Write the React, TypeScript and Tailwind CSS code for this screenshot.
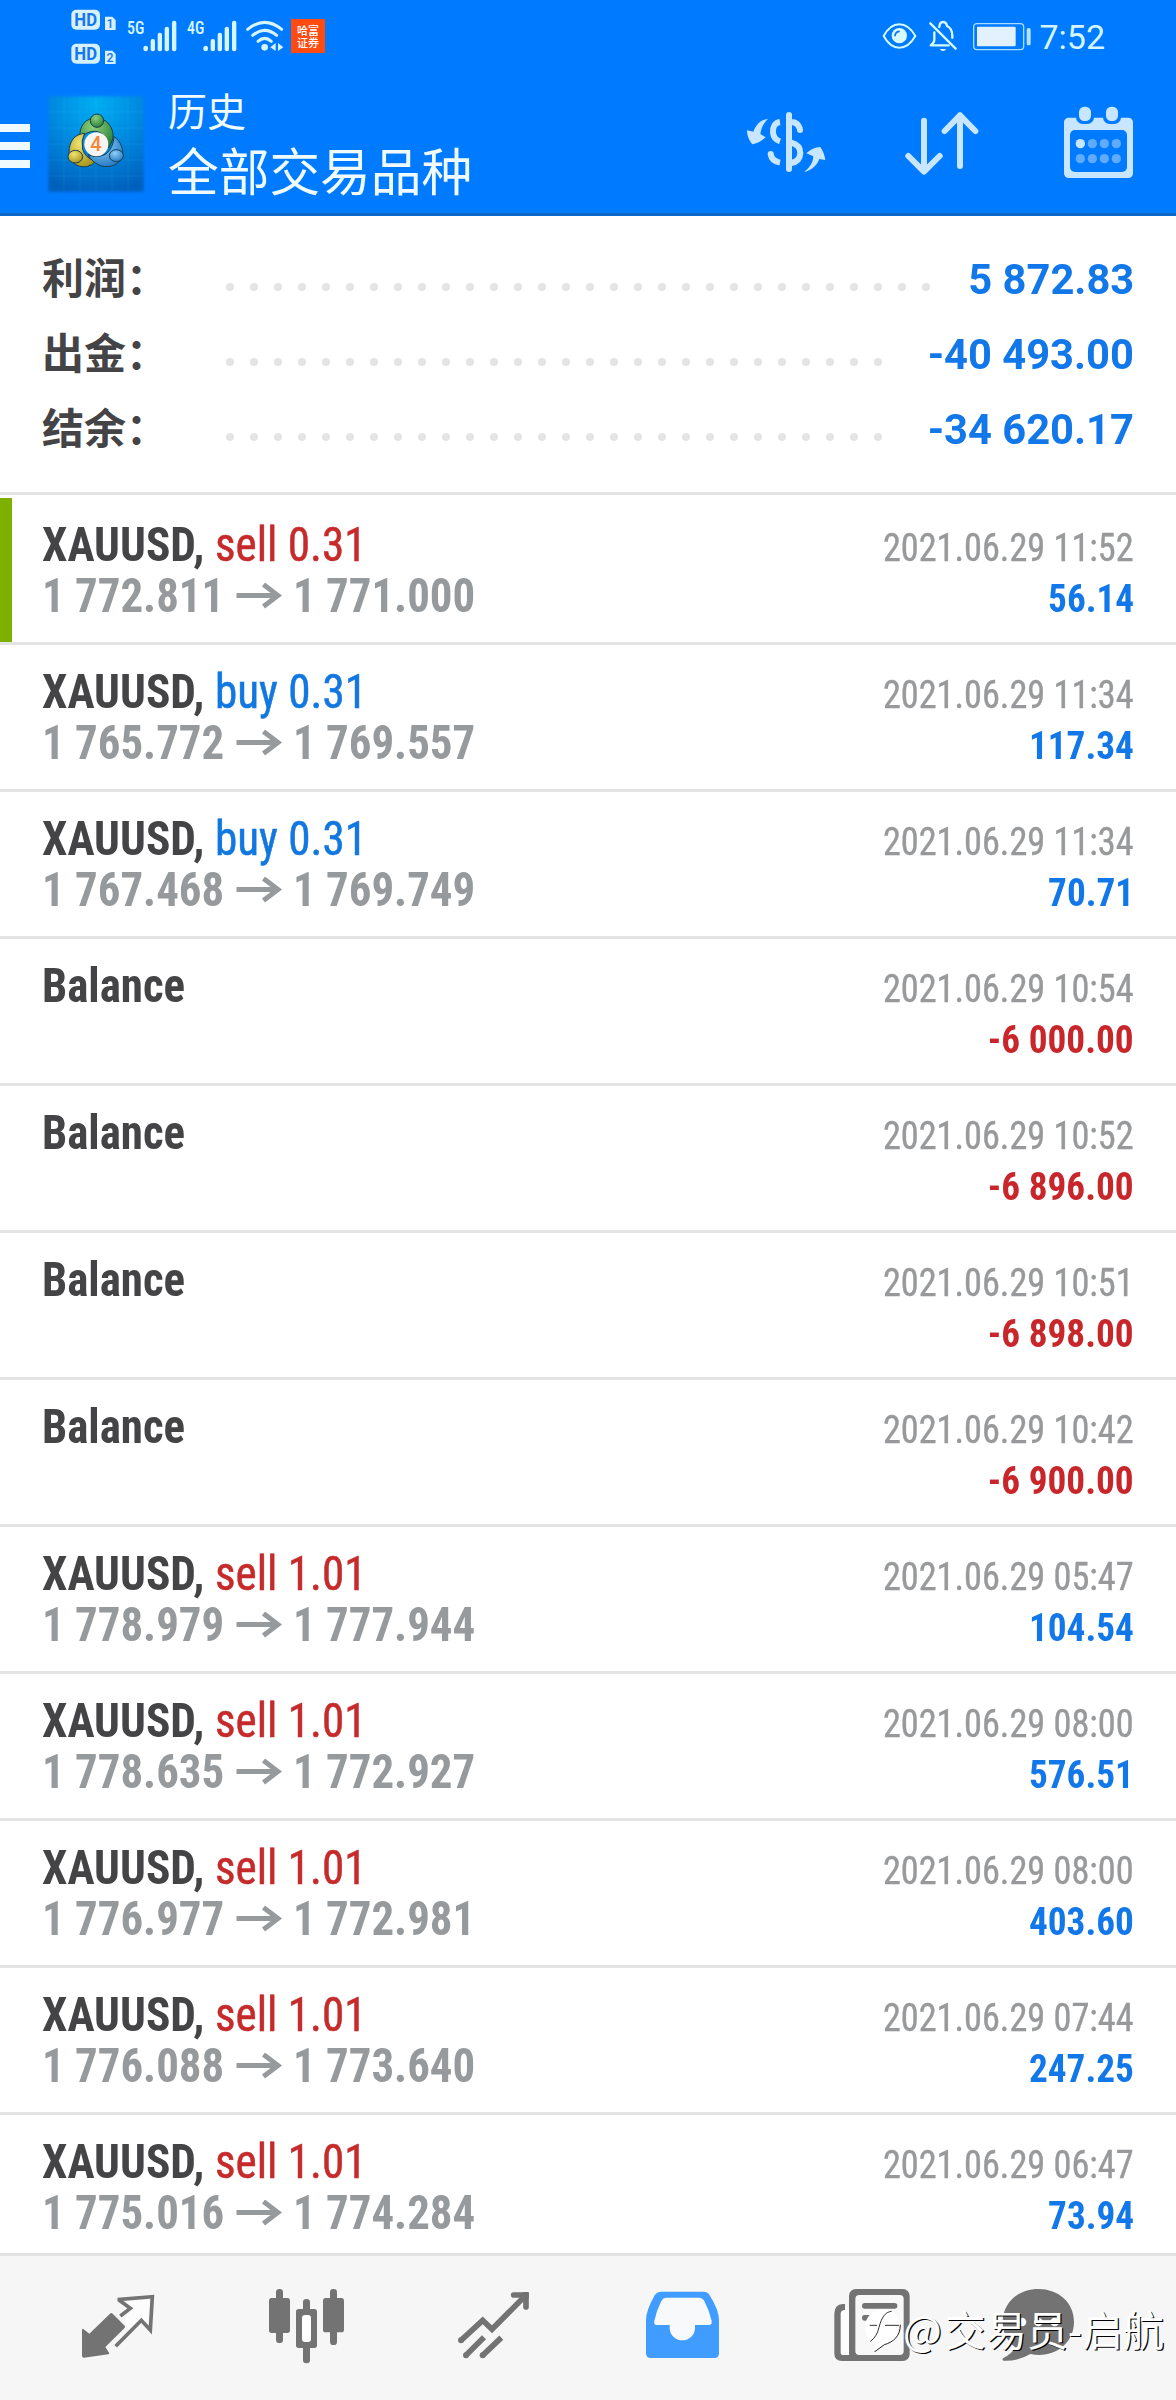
// History tab of the trading terminal: account summary on top, closed deals and
// balance operations below, tab bar at the bottom.

import type { ReactNode } from 'react';

interface SummaryLine {
  label: string;
  value: string;
  /** Number of leader dots between the label and the value. */
  dots: number;
}

interface Deal {
  /** Missing for balance operations. */
  side?: 'buy' | 'sell';
  volume?: string;
  open?: string;
  close?: string;
  time: string;
  profit: string;
}

const SUMMARY: SummaryLine[] = [
  { label: '利润', value: '5 872.83', dots: 30 },
  { label: '出金', value: '-40 493.00', dots: 28 },
  { label: '结余', value: '-34 620.17', dots: 28 },
];

const DEALS: Deal[] = [
  { side: 'sell', volume: '0.31', open: '1 772.811', close: '1 771.000', time: '2021.06.29 11:52', profit: '56.14' },
  { side: 'buy', volume: '0.31', open: '1 765.772', close: '1 769.557', time: '2021.06.29 11:34', profit: '117.34' },
  { side: 'buy', volume: '0.31', open: '1 767.468', close: '1 769.749', time: '2021.06.29 11:34', profit: '70.71' },
  { time: '2021.06.29 10:54', profit: '-6 000.00' },
  { time: '2021.06.29 10:52', profit: '-6 896.00' },
  { time: '2021.06.29 10:51', profit: '-6 898.00' },
  { time: '2021.06.29 10:42', profit: '-6 900.00' },
  { side: 'sell', volume: '1.01', open: '1 778.979', close: '1 777.944', time: '2021.06.29 05:47', profit: '104.54' },
  { side: 'sell', volume: '1.01', open: '1 778.635', close: '1 772.927', time: '2021.06.29 08:00', profit: '576.51' },
  { side: 'sell', volume: '1.01', open: '1 776.977', close: '1 772.981', time: '2021.06.29 08:00', profit: '403.60' },
  { side: 'sell', volume: '1.01', open: '1 776.088', close: '1 773.640', time: '2021.06.29 07:44', profit: '247.25' },
  { side: 'sell', volume: '1.01', open: '1 775.016', close: '1 774.284', time: '2021.06.29 06:47', profit: '73.94' },
];

/* ---------- status bar ---------- */

function HdBadges() {
  return (
    <svg className="h-[72px] w-12" viewBox="210 0 144 216" fill="#d5f0ff">
      {[0, 102].map((dy, i) => (
        <g key={dy} transform={`translate(0 ${dy})`}>
          <rect x="214" y="29" width="86" height="60" rx="15" />
          <text x="257" y="79" textAnchor="middle" fontSize="55" textLength="68" lengthAdjust="spacingAndGlyphs" fill="#1577ee" className="font-['Roboto'] font-bold">
            HD
          </text>
          <path d="M315 50H337L347 60V90H315Z" />
          <text x="330" y="85" textAnchor="middle" fontSize="37" fill="#1577ee" className="font-['Roboto'] font-medium">
            {i + 1}
          </text>
        </g>
      ))}
    </svg>
  );
}

function Signal({ label }: { label: string }) {
  return (
    <svg className="h-[72px] w-[55px]" viewBox="375 0 165 216" fill="#d5f6ff">
      <text x="381" y="102" fontSize="55" textLength="52" lengthAdjust="spacingAndGlyphs" className="font-['Roboto_Condensed'] font-medium">
        {label}
      </text>
      <rect x="430" y="137" width="14" height="17" rx="7" />
      <rect x="452" y="117" width="13" height="37" rx="6" />
      <rect x="473" y="98" width="13" height="56" rx="6" />
      <rect x="494" y="80" width="13" height="74" rx="6" />
      <rect x="516" y="62" width="13" height="92" rx="6" />
    </svg>
  );
}

function Wifi() {
  return (
    <svg className="h-[72px] w-10" viewBox="735 0 120 216" fill="none" stroke="#d5f6ff" strokeWidth="9" strokeLinecap="round">
      <path d="M743 88Q794 46 845 88" />
      <path d="M758 106Q794 76 830 106" />
      <path d="M774 124Q794 106 814 124" />
      <circle cx="794" cy="142" r="10" fill="#d5f6ff" stroke="none" />
      <path d="M811 142L827 129V153ZM850 142L834 129V153Z" fill="#d5f6ff" stroke="none" />
    </svg>
  );
}

function EyeIcon() {
  return (
    <svg className="h-[72px] w-[37px]" viewBox="543 0 111 216">
      <path d="M551 108Q570 73 598 73T646 108Q626 143 598 143T551 108Z" fill="none" stroke="#d5faff" strokeWidth="6" />
      <circle cx="598" cy="107" r="23" fill="#d5faff" />
      <path d="M585 107Q586 96 597 94" fill="none" stroke="#007aff" strokeWidth="5" strokeLinecap="round" />
    </svg>
  );
}

function MutedBell() {
  return (
    <svg className="h-[72px] w-8" viewBox="681 0 96 216" fill="none" stroke="#d5faff" strokeWidth="7" strokeLinecap="round">
      <path d="M691 70L767 146" />
      <path d="M718 81Q719 66 729 66T741 78Q757 85 757 108V113" />
      <path d="M703 97V119Q703 128 692 136H746" strokeLinejoin="round" />
      <path d="M720 147H738Q737 153 729 153T720 147Z" fill="#d5faff" stroke="none" />
    </svg>
  );
}

function Battery() {
  return (
    <svg className="h-[72px] w-[60px]" viewBox="816 0 180 216">
      <rect x="821" y="71" width="150" height="78" rx="10" fill="none" stroke="#a5dcff" strokeWidth="4" />
      <rect x="831" y="80" width="116" height="59" rx="3" fill="#e3f1ff" />
      <rect x="980" y="84" width="12" height="52" rx="5" fill="#b4e2ff" />
    </svg>
  );
}

function StatusBar() {
  return (
    <div className="flex h-[72px] items-start pl-[70px]">
      <HdBadges />
      <div className="ml-[7px] flex gap-[5px]">
        <Signal label="5G" />
        <Signal label="4G" />
        <Wifi />
      </div>
      <div className="mt-[19px] ml-[6px] flex h-[34px] w-[34px] flex-col items-center justify-center bg-[#ff4a12] font-['Noto_Sans_CJK_SC',sans-serif] text-[11px] leading-[12px] font-medium text-white">
        <span>哈富</span>
        <span>证券</span>
      </div>
      <div className="ml-auto flex pr-[71px]">
        <EyeIcon />
        <span className="w-[9px]" />
        <MutedBell />
        <span className="w-[13px]" />
        <Battery />
        <span className="ml-[7px] pt-[17px] font-['Roboto',sans-serif] text-[34px] leading-[40px] text-[#d5f6ff]">7:52</span>
      </div>
    </div>
  );
}

/* ---------- title bar ---------- */

function AppLogo() {
  return (
    <svg className="h-[110px] w-[110px]" viewBox="0 0 330 330">
      <defs>
        <radialGradient id="logo-bg" cx="0.5" cy="0.08" r="0.95">
          <stop offset="0" stopColor="#00aef2" />
          <stop offset="0.5" stopColor="#0088df" />
          <stop offset="1" stopColor="#0060bb" />
        </radialGradient>
        <radialGradient id="logo-green" cx="0.4" cy="0.3" r="0.8">
          <stop offset="0" stopColor="#8fd07c" />
          <stop offset="1" stopColor="#1f7a33" />
        </radialGradient>
        <radialGradient id="logo-yellow" cx="0.4" cy="0.3" r="0.8">
          <stop offset="0" stopColor="#f2e271" />
          <stop offset="1" stopColor="#a08f14" />
        </radialGradient>
        <radialGradient id="logo-blue" cx="0.4" cy="0.3" r="0.8">
          <stop offset="0" stopColor="#8ed2fb" />
          <stop offset="1" stopColor="#1b70bd" />
        </radialGradient>
        <filter id="logo-edge" x="-10%" y="-10%" width="120%" height="120%">
          <feGaussianBlur stdDeviation="4" />
        </filter>
      </defs>
      <rect x="25" y="31" width="286" height="286" fill="url(#logo-bg)" filter="url(#logo-edge)" />
      <path d="M72 34V314M120 34V314M168 34V314M216 34V314M264 34V314M28 78H308M28 126H308M28 174H308M28 222H308M28 270H308" stroke="#5cc4ff" strokeWidth="1.5" opacity="0.2" />
      <g stroke="#173f4f" strokeWidth="3">
        <path d="M120 158C116 118 138 96 168 96S222 122 219 156Q214 174 205 186Q200 140 168 136Q140 134 120 158Z" fill="url(#logo-green)" />
        <path d="M134 142C104 144 87 166 87 200C88 226 110 246 140 242Q158 238 166 226Q134 214 128 190Q122 164 134 142Z" fill="url(#logo-yellow)" />
        <path d="M222 152C244 166 252 194 246 212C236 238 210 246 184 240Q156 230 144 206Q172 218 198 204Q220 186 222 152Z" fill="url(#logo-blue)" />
        <circle cx="171" cy="104" r="20" fill="url(#logo-green)" />
        <ellipse cx="106" cy="212" rx="22" ry="19" fill="url(#logo-yellow)" />
        <ellipse cx="229" cy="209" rx="21" ry="18" fill="url(#logo-blue)" />
      </g>
      <circle cx="169" cy="175" r="36" fill="#f7f4f1" />
      <text x="168" y="196" textAnchor="middle" fontSize="60" fill="#f0883a" className="font-['Roboto'] font-medium">
        4
      </text>
    </svg>
  );
}

function CurrencyIcon() {
  return (
    <svg className="h-[76px] w-[82px]" viewBox="135 315 246 228" fill="none" stroke="#c8e6ff" strokeWidth="18">
      <path d="M267 345V507" strokeLinecap="round" />
      <path d="M240 366C224 368 218 382 219 397C220 411 228 420 240 424" />
      <path d="M212 462C214 476 224 485 240 488" />
      <circle cx="212" cy="462" r="9" fill="#c8e6ff" stroke="none" />
      <path d="M276 366C288 367 296 374 300 387" />
      <circle cx="300" cy="390" r="9" fill="#c8e6ff" stroke="none" />
      <path d="M274 428C292 433 301 445 301 459C300 476 291 486 274 489" />
      <g fill="#c8e6ff" stroke="none">
        <path d="M204 357C186 358 170 370 160 395L141 391C141 408 149 424 157 433C170 431 185 423 197 412L181 402C184 384 190 370 204 357Z" />
        <path d="M312 516C330 502 339 488 340 469L319 460C331 448 345 441 361 441C369 452 374 466 376 480L358 477C351 496 337 510 312 516Z" />
      </g>
    </svg>
  );
}

function SortIcon() {
  return (
    <svg className="h-[76px] w-[76px]" viewBox="612 315 228 228" fill="none" stroke="#c8e6ff" strokeWidth="18" strokeLinecap="round" strokeLinejoin="round">
      <path d="M672 362V514M625 468L672 515L719 468" />
      <path d="M780 498V346M734 393L780 346L826 393" />
    </svg>
  );
}

function CalendarIcon() {
  return (
    <svg className="h-[76px] w-[71px]" viewBox="1089 315 213 228">
      <rect x="1092" y="353" width="207" height="181" rx="14" fill="#c8e6ff" />
      <rect x="1110" y="390" width="171" height="126" rx="15" fill="#007aff" />
      {[1155, 1236].map((x) => (
        <g key={x}>
          <rect x={x - 27} y="330" width="54" height="42" rx="20" fill="#007aff" />
          <rect x={x - 18} y="320" width="36" height="43" rx="16" fill="#c8e6ff" />
        </g>
      ))}
      {[431, 476].map((y) =>
        [1141, 1177, 1213, 1249].map((x) => (
          <circle key={`${x}-${y}`} cx={x} cy={y} r="14" fill={x === 1141 && y === 431 ? '#c8e6ff' : '#5fabff'} />
        )),
      )}
    </svg>
  );
}

function TitleBar() {
  return (
    <div className="flex h-[141px] items-start">
      <div className="mt-[52px] flex w-[30px] flex-col gap-[10px]">
        <span className="h-2 bg-[#eefaff]" />
        <span className="h-2 bg-[#eefaff]" />
        <span className="h-2 bg-[#eefaff]" />
      </div>
      <div className="mt-[14px] ml-[10px]">
        <AppLogo />
      </div>
      <div className="mt-[15px] ml-[18px] flex flex-col font-['Noto_Sans_CJK_SC',sans-serif] text-[#f0fbff]">
        <span className="text-[39px] leading-[44px]">历史</span>
        <span className="mt-[8px] text-[50.7px] leading-[60px]">全部交易品种</span>
      </div>
      <div className="mt-[33px] ml-auto flex pr-[42px]">
        <CurrencyIcon />
        <span className="w-[77px]" />
        <SortIcon />
        <span className="w-[83px]" />
        <CalendarIcon />
      </div>
    </div>
  );
}

/* ---------- content ---------- */

function SummaryRow({ label, value, dots }: SummaryLine) {
  return (
    <div className="flex h-[75px] items-baseline">
      <span className="w-[184px] font-['Noto_Sans_CJK_SC',sans-serif] text-[42px] leading-[75px] font-bold text-[#444446]">{label}：</span>
      <span className="flex gap-[16px]">
        {Array.from({ length: dots }, (_, i) => (
          <span key={i} className="h-2 w-2 -translate-y-[3px] rounded-full bg-[#e4e4e4]" />
        ))}
      </span>
      <span className="ml-auto origin-right scale-x-[0.992] font-['Roboto',sans-serif] text-[42px] leading-[75px] font-bold text-[#1277e8]">{value}</span>
    </div>
  );
}

function PriceArrow() {
  return (
    <svg className="-mt-[1px] h-[26px] w-[46px] self-center" viewBox="0 0 46 26" fill="none" stroke="#979a9c" strokeWidth="5">
      <path d="M0.5 12.5H43M27.5 1.5L42 12.5L27.5 23.5" />
    </svg>
  );
}

function DealRow({ deal, selected }: { deal: Deal; selected: boolean }) {
  const sideColor = deal.side === 'buy' ? 'text-[#1277e0]' : 'text-[#c62a2a]';
  const profitColor = deal.profit.startsWith('-') ? 'text-[#c8262b]' : 'text-[#1277e8]';

  return (
    <div className="flex h-[147px] shrink-0 border-b-[3px] border-[#e4e4e4]">
      <div className={selected ? 'w-3 bg-[#7eb000]' : 'w-3'} />
      <div className="flex-1 pt-[22px] pr-[42px] pl-[30px] font-['Roboto_Condensed',sans-serif]">
        <div className="flex h-[51px] items-baseline justify-between leading-[51px]">
          {deal.side ? (
            <span className="flex items-baseline text-[47.5px] leading-[51px]">
              <span className="w-[173px] origin-left scale-x-[0.955] font-bold text-[#444446]">XAUUSD,</span>
              <span className={`origin-left scale-x-[0.95] [-webkit-text-stroke:0.5px] ${sideColor}`}>
                {deal.side} {deal.volume}
              </span>
            </span>
          ) : (
            <span className="origin-left scale-x-[0.945] text-[47.5px] leading-[51px] font-bold text-[#444446]">Balance</span>
          )}
          <span className="origin-right scale-x-[0.93] text-[39px] leading-[51px] text-[#97999b] [-webkit-text-stroke:0.4px]">{deal.time}</span>
        </div>
        <div className="flex h-[51px] items-baseline leading-[51px]">
          {deal.open && (
            <div className="flex items-baseline text-[47.5px] leading-[51px] font-bold text-[#979a9c]">
              <span className="w-[194px] origin-left scale-x-[0.945]">{deal.open}</span>
              <PriceArrow />
              <span className="ml-[11px] origin-left scale-x-[0.945]">{deal.close}</span>
            </div>
          )}
          <span className={`ml-auto origin-right scale-x-[0.955] text-[39px] font-bold ${deal.open ? 'leading-[51px]' : 'leading-[56px]'} ${profitColor}`}>
            {deal.profit}
          </span>
        </div>
      </div>
    </div>
  );
}

/* ---------- tab bar ---------- */

function Tab({ children, last = false }: { children: ReactNode; last?: boolean }) {
  return <div className={last ? 'flex w-[148px] justify-center' : 'flex w-[188px] justify-center'}>{children}</div>;
}

function TabBar() {
  return (
    <div className="relative z-10 flex h-[147px] shrink-0 border-t-[3px] border-[#e2e2e2] bg-[#f6f6f6] pt-[31px] pl-6">
      <Tab>
        <svg className="h-[77px] w-[74px]" viewBox="243 141 222 231">
          <path d="M246 268Q248 265 251 268L268 281L330 221Q334 217 338 221L374 257Q377 261 373 265L316 321L327 338Q329 342 325 343L252 353Q246 353 246 347Z" fill="#737373" />
          <path d="M369 187L447 179L443 252L424 234L384 268L374 240L394 205Z" fill="#fcfcfc" />
          <path d="M361 228L391 205L358 181V178L457 170L451 270L424 241L347 319" fill="none" stroke="#737373" strokeWidth="11" />
        </svg>
      </Tab>
      <Tab>
        <svg className="h-[77px] w-[77px]" viewBox="801 141 231 231" fill="#737373">
          <rect x="804" y="174" width="63" height="105" rx="8" />
          <rect x="825" y="147" width="21" height="162" rx="10" />
          <rect x="885" y="207" width="63" height="117" rx="8" />
          <rect x="906" y="177" width="21" height="50" rx="10" />
          <rect x="906" y="310" width="21" height="60" rx="10" />
          <rect x="903" y="225" width="27" height="81" rx="9" fill="#fff" />
          <rect x="966" y="174" width="63" height="103" rx="8" />
          <rect x="987" y="147" width="21" height="168" rx="10" />
        </svg>
      </Tab>
      <Tab>
        <svg className="-ml-[2px] h-[77px] w-[73px]" viewBox="171 141 219 231" fill="none" stroke="#737373" strokeWidth="17">
          <path d="M183 301L248 241L276 268L375 168" />
          <path d="M341 165H378V201" strokeLinecap="round" />
          <path d="M198 346L252 292M248 346L304 293" />
          <g fill="#737373" stroke="none">
            <circle cx="183" cy="301" r="9" />
            <circle cx="198" cy="346" r="9" />
            <circle cx="248" cy="346" r="9" />
            <rect x="366" y="156" width="21" height="20" rx="5" />
          </g>
        </svg>
      </Tab>
      <Tab>
        <svg className="h-[77px] w-[75px]" viewBox="735 141 225 231">
          <path d="M783 155H911Q922 155 928 164Q957 210 957 240V340Q957 354 943 354H752Q738 354 738 340V240Q738 212 764 166Q771 155 783 155Z" fill="#409cff" />
          <path d="M799 173H896Q908 173 913 183Q928 212 935 243Q937 255 926 255H885V264A38 37 0 0 1 809 264V255H771Q760 255 763 243Q770 210 784 183Q789 173 799 173Z" fill="#f8f9fa" />
        </svg>
      </Tab>
      <Tab>
        <svg className="ml-[3px] h-[77px] w-[78px]" viewBox="171 141 234 231">
          <path d="M207 192H200Q175 194 175 220V340Q175 363 198 363H250V345H219V210H207Z" fill="#737373" />
          <path d="M194 222Q194 210 207 210H219V345H200Q194 345 194 338Z" fill="#fcfcfc" />
          <rect x="219" y="147" width="182" height="216" rx="20" fill="#737373" />
          <rect x="238" y="165" width="145" height="180" rx="12" fill="#f8f8f8" />
          <rect x="258" y="189" width="106" height="17" rx="8" fill="#737373" />
          <rect x="258" y="225" width="106" height="17" rx="8" fill="#737373" />
        </svg>
      </Tab>
      <Tab last>
        <svg className="h-[77px] w-[74px]" viewBox="675 141 222 231">
          <path d="M787 147C848 147 894 188 894 246S846 345 790 345Q776 345 763 342Q726 364 682 362Q677 358 682 354Q708 342 718 322Q680 294 680 246C680 188 727 147 787 147Z" fill="#737373" />
          <circle cx="738" cy="246" r="13" fill="#fff" />
          <circle cx="787" cy="246" r="13" fill="#fff" />
          <circle cx="836" cy="246" r="13" fill="#fff" />
        </svg>
      </Tab>
      <Watermark />
    </div>
  );
}

function Watermark() {
  return (
    <div className="absolute top-[48px] right-[12px] flex items-center text-white">
      <svg className="h-12 w-10" viewBox="0 0 120 144">
        <path d="M64 16C94 16 114 40 112 70C110 100 90 118 64 122Q52 130 34 142L38 118C14 108 4 88 6 64C10 34 34 16 64 16Z" fill="#fff" />
        <path d="M86 22C66 24 56 40 48 70C44 90 34 104 22 112M20 64H42M66 64H108" fill="none" stroke="#333" strokeWidth="3" />
        <path d="M112 62C112 96 92 114 64 122L34 144" fill="none" stroke="#222" strokeWidth="3" />
      </svg>
      <span className="font-['Noto_Sans_CJK_SC',sans-serif] text-[41px] leading-[48px] whitespace-nowrap [text-shadow:1.3px_1.3px_0_#000]">
        <span className="mr-[3px]">@</span>交易员-启航
      </span>
    </div>
  );
}

export default function App() {
  return (
    <div className="flex h-[2400px] w-[1176px] flex-col overflow-hidden bg-white">
      <header className="h-[216px] shrink-0 border-b-[3px] border-[#0d68c8] bg-[#007aff]">
        <StatusBar />
        <TitleBar />
      </header>
      <section className="h-[279px] shrink-0 border-b-[3px] border-[#e4e4e4] px-[42px] pt-[22px]">
        {SUMMARY.map((line) => (
          <SummaryRow key={line.label} {...line} />
        ))}
      </section>
      <main className="flex min-h-0 flex-1 flex-col overflow-hidden pt-[3px]">
        {DEALS.map((deal, i) => (
          <DealRow key={i} deal={deal} selected={i === 0} />
        ))}
      </main>
      <TabBar />
    </div>
  );
}
